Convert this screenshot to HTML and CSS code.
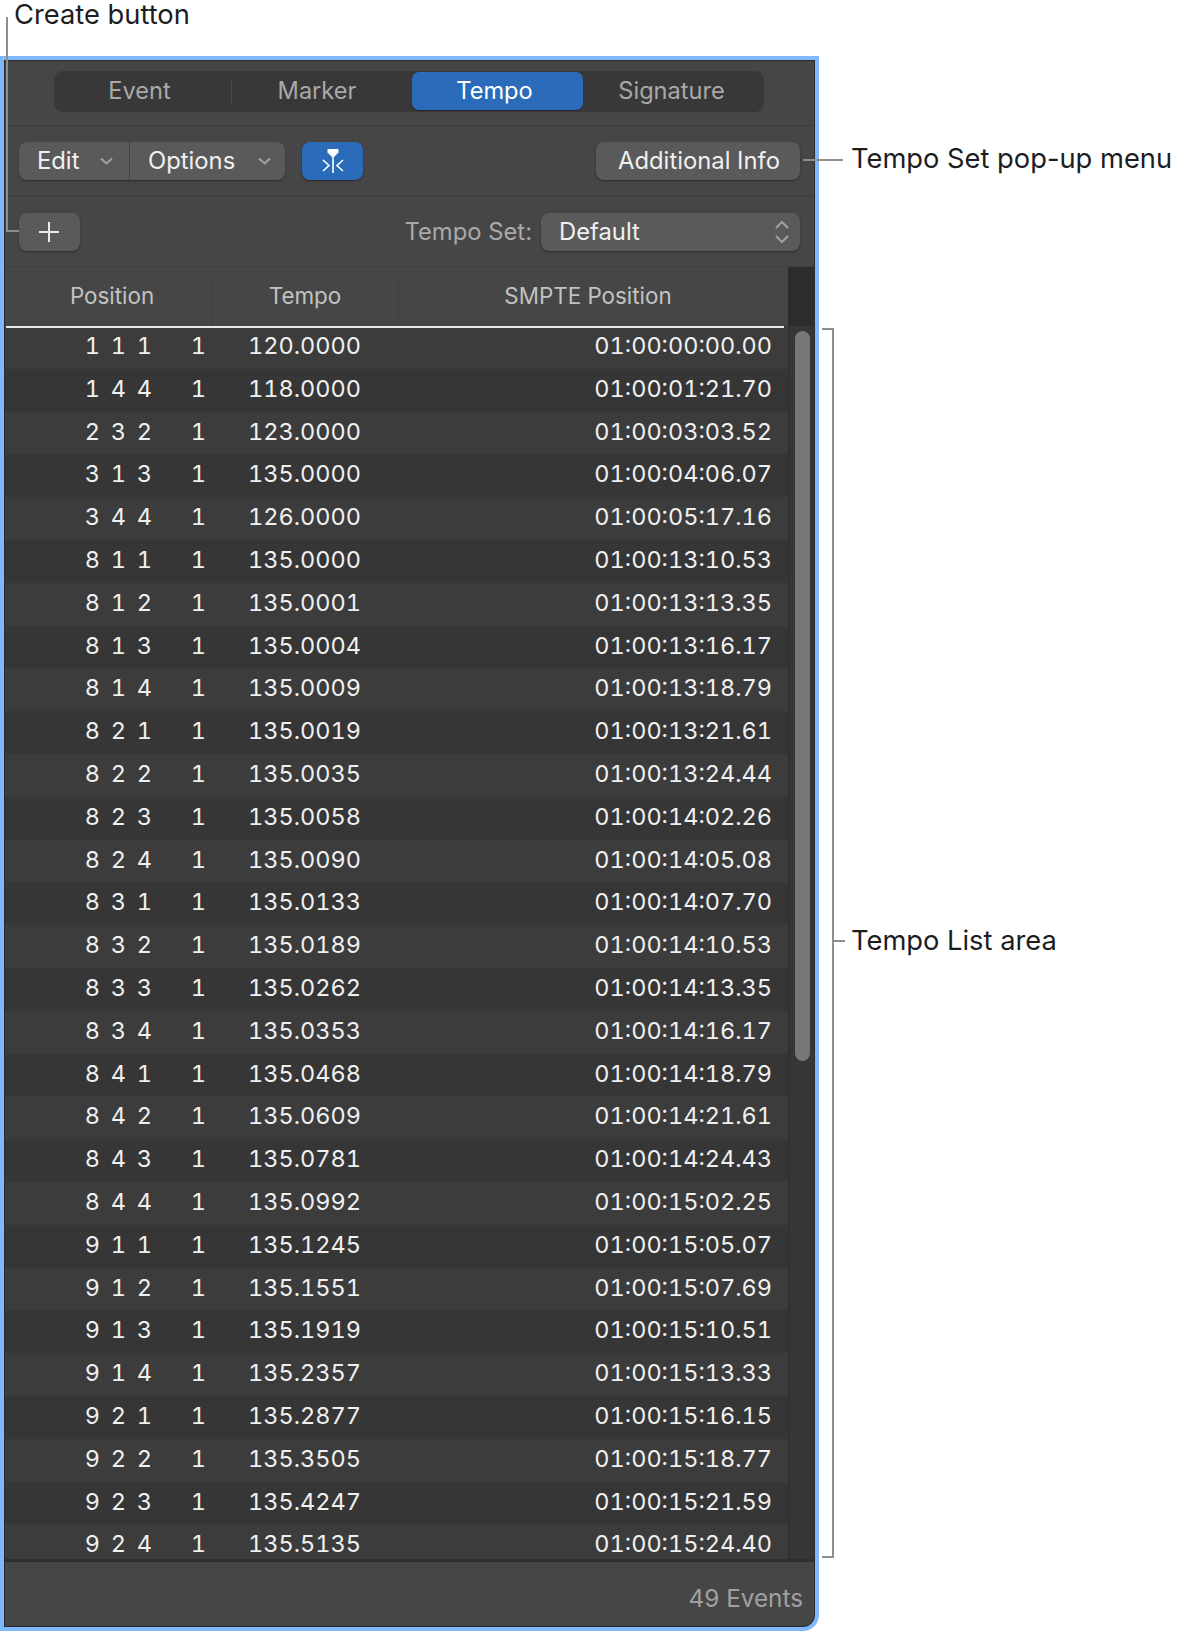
FILE: index.html
```html
<!DOCTYPE html>
<html>
<head>
    <title>Tempo List</title>
    <link rel="stylesheet" href="styles.css">
</head>
<body>
    <div class="page">
        <div class="top-label">Create button</div>

        <div class="panel">
            <div class="tab-bar">
                <div class="tabs">
                    <div class="tab tab-event">Event</div>
                    <div class="tab tab-marker">Marker</div>
                    <div class="tab tab-tempo active">Tempo</div>
                    <div class="tab tab-signature">Signature</div>
                </div>
            </div>

            <div class="toolbar">
                <div class="btn-group">
                    <div class="btn-part part-edit">Edit
                        <svg class="chevron" width="13" height="8" viewBox="0 0 13 8"><path d="M1 1.5 L6.5 6.5 L12 1.5" /></svg>
                    </div>
                    <div class="btn-part part-options">Options
                        <svg class="chevron" width="13" height="8" viewBox="0 0 13 8"><path d="M1 1.5 L6.5 6.5 L12 1.5" /></svg>
                    </div>
                </div>
                <div class="btn-catch">
                    <svg width="24" height="26" viewBox="0 0 24 26">
                        <path class="catch-head" d="M6.5 1 H17.5 V4.5 L13 9 H11 L6.5 4.5 Z" />
                        <path class="catch-line" d="M12 6 V25 M2 12 L8 17.5 L2 23 M22 12 L16 17.5 L22 23" />
                    </svg>
                </div>
                <div class="btn btn-info">Additional Info</div>
            </div>

            <div class="toolbar toolbar-set">
                <div class="btn btn-add">
                    <svg width="22" height="22" viewBox="0 0 22 22"><path d="M11 1 V21 M1 11 H21" /></svg>
                </div>
                <div class="set-label">Tempo Set:</div>
                <div class="popup">Default
                    <svg class="updown" width="16" height="24" viewBox="0 0 16 24">
                        <path d="M2 8 L8 2 L14 8 M2 16 L8 22 L14 16" />
                    </svg>
                </div>
            </div>

            <div class="list-head">
                <div class="columns">
                    <div class="col col-pos">Position</div>
                    <div class="col col-tempo">Tempo</div>
                    <div class="col col-smpte">SMPTE Position</div>
                </div>
                <div class="scroll-head"></div>
            </div>

            <div class="list-wrap">
                <div class="rows">
                    <div class="row"><span>1</span><span>1</span><span>1</span><span>1</span><span>120.0000</span><span>01:00:00:00.00</span></div>
                    <div class="row"><span>1</span><span>4</span><span>4</span><span>1</span><span>118.0000</span><span>01:00:01:21.70</span></div>
                    <div class="row"><span>2</span><span>3</span><span>2</span><span>1</span><span>123.0000</span><span>01:00:03:03.52</span></div>
                    <div class="row"><span>3</span><span>1</span><span>3</span><span>1</span><span>135.0000</span><span>01:00:04:06.07</span></div>
                    <div class="row"><span>3</span><span>4</span><span>4</span><span>1</span><span>126.0000</span><span>01:00:05:17.16</span></div>
                    <div class="row"><span>8</span><span>1</span><span>1</span><span>1</span><span>135.0000</span><span>01:00:13:10.53</span></div>
                    <div class="row"><span>8</span><span>1</span><span>2</span><span>1</span><span>135.0001</span><span>01:00:13:13.35</span></div>
                    <div class="row"><span>8</span><span>1</span><span>3</span><span>1</span><span>135.0004</span><span>01:00:13:16.17</span></div>
                    <div class="row"><span>8</span><span>1</span><span>4</span><span>1</span><span>135.0009</span><span>01:00:13:18.79</span></div>
                    <div class="row"><span>8</span><span>2</span><span>1</span><span>1</span><span>135.0019</span><span>01:00:13:21.61</span></div>
                    <div class="row"><span>8</span><span>2</span><span>2</span><span>1</span><span>135.0035</span><span>01:00:13:24.44</span></div>
                    <div class="row"><span>8</span><span>2</span><span>3</span><span>1</span><span>135.0058</span><span>01:00:14:02.26</span></div>
                    <div class="row"><span>8</span><span>2</span><span>4</span><span>1</span><span>135.0090</span><span>01:00:14:05.08</span></div>
                    <div class="row"><span>8</span><span>3</span><span>1</span><span>1</span><span>135.0133</span><span>01:00:14:07.70</span></div>
                    <div class="row"><span>8</span><span>3</span><span>2</span><span>1</span><span>135.0189</span><span>01:00:14:10.53</span></div>
                    <div class="row"><span>8</span><span>3</span><span>3</span><span>1</span><span>135.0262</span><span>01:00:14:13.35</span></div>
                    <div class="row"><span>8</span><span>3</span><span>4</span><span>1</span><span>135.0353</span><span>01:00:14:16.17</span></div>
                    <div class="row"><span>8</span><span>4</span><span>1</span><span>1</span><span>135.0468</span><span>01:00:14:18.79</span></div>
                    <div class="row"><span>8</span><span>4</span><span>2</span><span>1</span><span>135.0609</span><span>01:00:14:21.61</span></div>
                    <div class="row"><span>8</span><span>4</span><span>3</span><span>1</span><span>135.0781</span><span>01:00:14:24.43</span></div>
                    <div class="row"><span>8</span><span>4</span><span>4</span><span>1</span><span>135.0992</span><span>01:00:15:02.25</span></div>
                    <div class="row"><span>9</span><span>1</span><span>1</span><span>1</span><span>135.1245</span><span>01:00:15:05.07</span></div>
                    <div class="row"><span>9</span><span>1</span><span>2</span><span>1</span><span>135.1551</span><span>01:00:15:07.69</span></div>
                    <div class="row"><span>9</span><span>1</span><span>3</span><span>1</span><span>135.1919</span><span>01:00:15:10.51</span></div>
                    <div class="row"><span>9</span><span>1</span><span>4</span><span>1</span><span>135.2357</span><span>01:00:15:13.33</span></div>
                    <div class="row"><span>9</span><span>2</span><span>1</span><span>1</span><span>135.2877</span><span>01:00:15:16.15</span></div>
                    <div class="row"><span>9</span><span>2</span><span>2</span><span>1</span><span>135.3505</span><span>01:00:15:18.77</span></div>
                    <div class="row"><span>9</span><span>2</span><span>3</span><span>1</span><span>135.4247</span><span>01:00:15:21.59</span></div>
                    <div class="row"><span>9</span><span>2</span><span>4</span><span>1</span><span>135.5135</span><span>01:00:15:24.40</span></div>
                </div>
                <div class="scroll-track"><div class="scroll-thumb"></div></div>
            </div>

            <div class="footer">49 Events</div>
        </div>

        <!-- callouts -->
        <div class="leader leader-create"></div>
        <div class="leader leader-set"></div>
        <div class="callout callout-set">Tempo Set pop-up menu</div>
        <div class="bracket"></div>
        <div class="leader leader-list"></div>
        <div class="callout callout-list">Tempo List area</div>
    </div>
</body>
</html>
```

FILE: styles.css
```css
:root {
    --panel: #464646;
    --line: #3c3c3c;
    --button: #5a5a5a;
    --blue: #2a6cb9;
    --leader: #8e8e8e;
}

body {
    margin: 0;
    background: white;
    font-family: 'Inter', 'Liberation Sans', sans-serif;
}

.page {
    position: relative;
    width: 1190px;
    height: 1634px;
    overflow: hidden;
}

.top-label {
    height: 56px;
    padding-left: 14px;
    font-size: 27.3px;
    line-height: 30px;
    color: #1d1d1f;
}

.panel {
    box-sizing: border-box;
    width: 819px;
    height: 1575px;
    border: 4px solid #7fb9fb;
    border-bottom-right-radius: 16px;
    background: var(--panel);
    box-shadow: inset 0 0 0 1px #2b2b2b;
    padding: 1px;
    display: flex;
    flex-direction: column;
    overflow: hidden;
}

.tab-bar {
    height: 65px;
    flex: none;
    box-sizing: border-box;
    padding: 10px 0 0 49px;
    border-bottom: 1px solid var(--line);
}

.tabs {
    display: flex;
    width: 710px;
    height: 41px;
    background: #383838;
    border-radius: 9px;
    color: #a9a9a9;
    font-size: 23.6px;
}

.tab {
    display: flex;
    align-items: center;
    justify-content: center;
    box-sizing: border-box;
    padding-bottom: 2px;
}

.tab-event { width: 178px; padding-right: 7px; position: relative; }
.tab-marker { width: 180px; padding-right: 10px; }
.tab-tempo { width: 171px; padding-right: 6px; }
.tab-signature { width: 181px; padding-right: 4px; }

.tab-event::after {
    content: "";
    position: absolute;
    right: 0;
    top: 8px;
    bottom: 8px;
    width: 1px;
    background: #4a4a4a;
}

.tab.active {
    height: 38px;
    margin-top: 1px;
    background: var(--blue);
    border-radius: 7px;
    color: white;
    box-shadow: 0 1px 1px rgba(0,0,0,0.3);
}

.toolbar {
    height: 71px;
    flex: none;
    box-sizing: border-box;
    display: flex;
    align-items: center;
    padding: 0 14px 0 14px;
    border-bottom: 1px solid var(--line);
    color: #f0f0f0;
    font-size: 23.8px;
}

.btn-group {
    display: flex;
    width: 266px;
    height: 38px;
    background: var(--button);
    border-radius: 8px;
    box-shadow: 0 1px 2px rgba(0,0,0,0.4);
}

.btn-part {
    display: flex;
    align-items: center;
    justify-content: space-between;
    box-sizing: border-box;
    padding: 0 14px 2px 18px;
}

.part-edit {
    width: 111px;
    padding-right: 16px;
    border-right: 1px solid #444;
}

.part-options {
    flex: 1;
}

.chevron {
    margin-top: 2px;
}

.chevron path,
.updown path {
    fill: none;
    stroke: #a2a2a2;
    stroke-width: 2;
}

.btn-catch {
    display: flex;
    align-items: center;
    justify-content: center;
    width: 61px;
    height: 38px;
    margin-left: 17px;
    background: var(--blue);
    border-radius: 8px;
    box-shadow: 0 1px 2px rgba(0,0,0,0.4);
}

.catch-head {
    fill: white;
}

.catch-line {
    fill: none;
    stroke: white;
    stroke-width: 1.6;
}

.btn {
    display: flex;
    align-items: center;
    justify-content: center;
    box-sizing: border-box;
    height: 38px;
    padding-bottom: 2px;
    background: var(--button);
    border-radius: 8px;
    box-shadow: 0 1px 2px rgba(0,0,0,0.4);
}

.btn-info {
    width: 204px;
    margin-left: auto;
    padding-left: 2px;
}

.toolbar-set {
    height: 70px;
    border-bottom-color: #404040;
}

.btn-add {
    width: 61px;
    padding: 0 2px 0 0;
}

.btn-add path {
    stroke: #ececec;
    stroke-width: 2;
    fill: none;
}

.set-label {
    margin-left: auto;
    margin-right: 9px;
    color: #a9a9a9;
}

.popup {
    display: flex;
    align-items: center;
    justify-content: space-between;
    box-sizing: border-box;
    width: 259px;
    height: 38px;
    padding: 0 10px 0 18px;
    background: var(--button);
    border-radius: 8px;
    box-shadow: 0 1px 2px rgba(0,0,0,0.4);
}

.list-head {
    height: 59px;
    flex: none;
    display: flex;
    position: relative;
    z-index: 1;
}

.columns {
    width: 778px;
    margin-left: 1px;
    padding-top: 13px;
    box-sizing: border-box;
    display: flex;
    box-shadow: 0 2px 0 #e9e9e9;
    color: #c2c2c2;
    font-size: 22.4px;
}

.col {
    display: flex;
    align-items: center;
    justify-content: center;
    box-sizing: border-box;
    height: 44px;
    padding-bottom: 14px;
    border-right: 1px solid #3d3d3d;
}

.col-pos { width: 206px; padding-left: 7px; }
.col-tempo { width: 187px; }
.col-smpte { width: 385px; padding-right: 7px; border-right: none; }

.scroll-head {
    width: 27px;
    margin-left: 4px;
    background: #2c2c2c;
}

.list-wrap {
    height: 1233px;
    flex: none;
    display: flex;
    overflow: hidden;
    border-bottom: 3px solid #2e2e2e;
}

.rows {
    width: 783px;
    flex: none;
}

.row {
    display: grid;
    grid-template-columns: 26px 26px 26px 54px 155px 411px;
    box-sizing: border-box;
    height: 42.8px;
    padding-left: 69px;
    line-height: 40px;
    text-align: right;
    color: #f0f0f0;
    font-size: 23.5px;
    font-feature-settings: "tnum";
    background: #3c3c3c;
}

.row:nth-child(even) {
    background: #363636;
}

.scroll-track {
    flex: 1;
    background: #363636;
    border-left: 1px solid #2b2b2b;
    padding: 5px 0 0 6px;
}

.scroll-thumb {
    width: 15px;
    height: 730px;
    background: #777777;
    border-radius: 8px;
}

.footer {
    flex: 1;
    padding: 21px 11px 0 0;
    text-align: right;
    color: #a0a0a0;
    font-size: 24.3px;
}

/* callouts over the white margin */
.callout {
    position: absolute;
    left: 851px;
    font-size: 27.3px;
    line-height: 30px;
    color: #1d1d1f;
    white-space: nowrap;
}

.callout-set { top: 144px; }
.callout-list { top: 926px; }

.leader {
    position: absolute;
    background: var(--leader);
}

.leader-set {
    left: 803px;
    top: 159px;
    width: 40px;
    height: 2px;
}

.leader-list {
    left: 834px;
    top: 940px;
    width: 11px;
    height: 2px;
}

.leader-create {
    left: 6px;
    top: 17px;
    width: 13px;
    height: 215px;
    box-sizing: border-box;
    background: none;
    border-left: 2px solid var(--leader);
    border-bottom: 2px solid var(--leader);
}

.bracket {
    position: absolute;
    left: 822px;
    top: 328px;
    width: 12px;
    height: 1230px;
    box-sizing: border-box;
    border: 2px solid var(--leader);
    border-left: none;
}
```
